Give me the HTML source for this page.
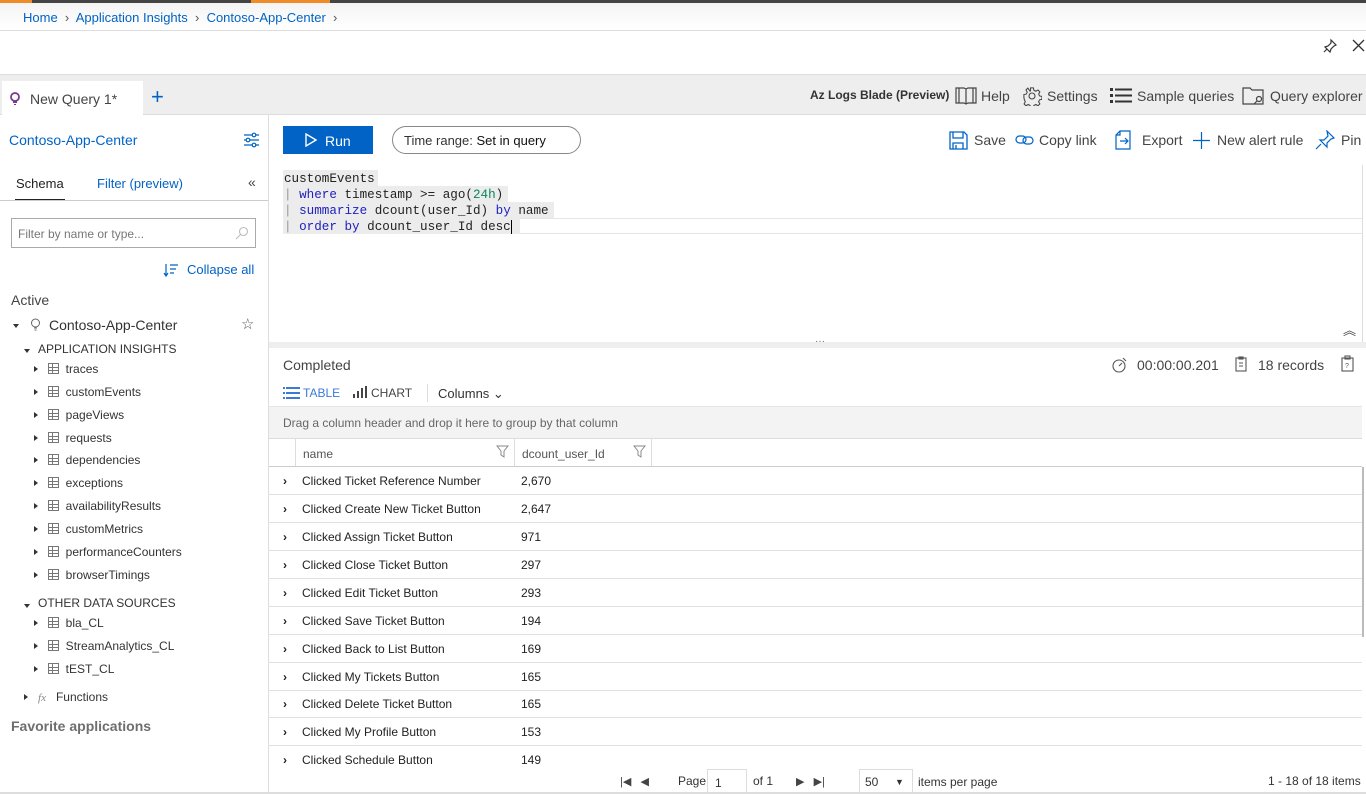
<!DOCTYPE html>
<html><head><meta charset="utf-8"><style>
*{box-sizing:border-box;margin:0;padding:0}
body{width:1366px;height:794px;overflow:hidden;background:#fff;font-family:"Liberation Sans",sans-serif;font-size:13px;color:#333;position:relative}
.a{position:absolute;white-space:nowrap}
.blue{color:#0063c5}
.mono{font-family:"Liberation Mono",monospace;font-size:12.6px}
.tri{display:inline-block;width:0;height:0;border-top:3px solid transparent;border-bottom:3px solid transparent;border-left:4px solid #333;vertical-align:1px}
.trd{display:inline-block;width:0;height:0;border-left:3.5px solid transparent;border-right:3.5px solid transparent;border-top:4px solid #333}
.tbl{display:inline-block;width:11px;height:11px;border:1px solid #777;vertical-align:-1px;background:linear-gradient(#777,#777) 0 3px/100% 1px no-repeat,linear-gradient(#777,#777) 0 6px/100% 1px no-repeat,linear-gradient(#777,#777) 3px 0/1px 100% no-repeat}
.row{position:absolute;left:268px;width:1094px;height:28px;border-bottom:1px solid #e1e1e1;font-size:12px;color:#222}
.row span{position:absolute;top:7px}
.tr div{height:22.85px}
</style></head><body>
<div class="a" style="left:0;top:0;width:1366px;height:3px;background:#444"></div>
<div class="a" style="left:0;top:0;width:32px;height:3px;background:#f08c28"></div>
<div class="a" style="left:251px;top:0;width:79px;height:3px;background:#f08c28"></div>
<div class="a" style="left:0;top:3px;width:1366px;height:27px;background:linear-gradient(#f4f4f4,#fff)"></div>
<div class="a" style="left:0;top:30px;width:1366px;height:1px;background:#ddd"></div>
<div class="a blue" style="left:23px;top:10px;font-size:13px">Home <span style="color:#555">&nbsp;›&nbsp;</span> Application Insights <span style="color:#555">&nbsp;›&nbsp;</span> Contoso-App-Center <span style="color:#555">&nbsp;›</span></div>
<svg class="a" style="left:1322px;top:38px" width="16" height="16" viewBox="0 0 16 16" fill="none" stroke="#333" stroke-width="1.2"><path d="M9 2l5 5-2 1-3 3-1 3-5-5 3-1 3-3z M5 11l-3 3"/></svg>
<svg class="a" style="left:1352px;top:39px" width="13" height="13" viewBox="0 0 13 13" stroke="#333" stroke-width="1.3"><path d="M1 1l11 11M12 1L1 12"/></svg>
<div class="a" style="left:0;top:74px;width:1366px;height:41px;background:#eee;border-top:1px solid #ddd;border-bottom:1px solid #ddd"></div>
<div class="a" style="left:2px;top:81px;width:141px;height:35px;background:#fff"></div>
<svg class="a" style="left:9px;top:92px" width="12" height="14" viewBox="0 0 12 14"><circle cx="6" cy="5" r="4" fill="none" stroke="#7a3b8f" stroke-width="1.8"/><path d="M4 9h4v2H4z M5 12h2v1H5z" fill="#7a3b8f"/></svg>
<div class="a" style="left:30px;top:91px;font-size:14px;color:#444">New Query 1*</div>
<div class="a" style="left:151px;top:84px;font-size:22px;color:#0063c5;font-weight:300">+</div>
<div class="a" style="left:810px;top:88px;font-size:12px;font-weight:bold;color:#333">Az Logs Blade (Preview)</div>
<svg class="a" style="left:955px;top:86px" width="22" height="19" viewBox="0 0 22 19" fill="none" stroke="#444" stroke-width="1.2"><path d="M1 2h8l2 1 2-1h8v15h-8l-2 1-2-1H1z M11 3v15 M4 2v15 M18 2v15"/></svg>
<div class="a" style="left:981px;top:88px;font-size:14px;color:#444">Help</div>
<svg class="a" style="left:1022px;top:86px" width="20" height="20" viewBox="0 0 20 20" fill="none" stroke="#444" stroke-width="1.1"><circle cx="10" cy="10" r="3"/><path d="M8.5 1.5h3l.5 2.5 2 1 2.3-1.3 2 2-1.3 2.3 1 2 2.5.5v3l-2.5.5-1 2 1.3 2.3-2 2-2.3-1.3-2 1-.5 2.5h-3l-.5-2.5-2-1-2.3 1.3-2-2 1.3-2.3-1-2L1.5 11.5v-3l2.5-.5 1-2-1.3-2.3 2-2L8 5l.5-1z" transform="scale(.95) translate(.5 .5)"/></svg>
<div class="a" style="left:1047px;top:88px;font-size:14px;color:#444">Settings</div>
<svg class="a" style="left:1110px;top:87px" width="22" height="17" viewBox="0 0 22 17" fill="#333"><rect x="0" y="1" width="3" height="3"/><rect x="5" y="1.5" width="17" height="2"/><rect x="0" y="7" width="3" height="3"/><rect x="5" y="7.5" width="17" height="2"/><rect x="0" y="13" width="3" height="3"/><rect x="5" y="13.5" width="17" height="2"/></svg>
<div class="a" style="left:1137px;top:88px;font-size:14px;color:#444">Sample queries</div>
<svg class="a" style="left:1242px;top:86px" width="23" height="20" viewBox="0 0 23 20" fill="none" stroke="#444" stroke-width="1.2"><path d="M1 2h7l2 2h11v14H1z"/><circle cx="17" cy="13" r="2.5"/><path d="M15 15l-3 3"/></svg>
<div class="a" style="left:1270px;top:88px;font-size:14px;color:#444">Query explorer</div>
<div class="a" style="left:268px;top:115px;width:1px;height:679px;background:#ddd"></div>
<div class="a blue" style="left:9px;top:132px;font-size:14px">Contoso-App-Center</div>
<svg class="a" style="left:243px;top:132px" width="17" height="16" viewBox="0 0 17 16" fill="none" stroke="#0063c5" stroke-width="1.2"><path d="M1 3h15M1 8h15M1 13h15"/><circle cx="11" cy="3" r="1.8" fill="#fff"/><circle cx="5" cy="8" r="1.8" fill="#fff"/><circle cx="11" cy="13" r="1.8" fill="#fff"/></svg>
<div class="a" style="left:16px;top:176px;font-size:13px;color:#222">Schema</div>
<div class="a" style="left:15px;top:199px;width:50px;height:2px;background:#222"></div>
<div class="a blue" style="left:97px;top:176px;font-size:13px">Filter (preview)</div>
<div class="a" style="left:248px;top:174px;font-size:14px;color:#444">«</div>
<div class="a" style="left:0;top:200px;width:268px;height:1px;background:#ccc"></div>
<div class="a" style="left:11px;top:218px;width:245px;height:30px;border:1px solid #aaa"></div>
<div class="a" style="left:18px;top:227px;font-size:12px;color:#777">Filter by name or type...</div>
<svg class="a" style="left:235px;top:226px" width="14" height="14" viewBox="0 0 14 14" fill="none" stroke="#bbb" stroke-width="1.1"><circle cx="8.5" cy="5.5" r="4"/><path d="M5.5 8.5L1 13"/></svg>
<svg class="a" style="left:163px;top:263px" width="16" height="14" viewBox="0 0 16 14" fill="none" stroke="#0063c5" stroke-width="1.2"><path d="M3 1v12M1 10l2 3 2-3M7 2h8M7 6h6M7 10h4"/></svg>
<div class="a blue" style="left:187px;top:262px;font-size:13px">Collapse all</div>
<div class="a" style="left:11px;top:292px;font-size:14px;color:#444">Active</div>
<div class="a" style="left:13px;top:316px"><span class="trd"></span></div>
<svg class="a" style="left:30px;top:318px" width="11" height="13" viewBox="0 0 11 13" fill="none" stroke="#666" stroke-width="1"><circle cx="5.5" cy="5" r="4"/><path d="M4 10h3M4.5 12h2"/></svg>
<div class="a" style="left:49px;top:317px;font-size:14px;color:#333">Contoso-App-Center</div>
<div class="a" style="left:241px;top:315px;font-size:15px;color:#555">☆</div>
<div class="a" style="left:24px;top:341px"><span class="trd"></span></div>
<div class="a" style="left:38px;top:342px;font-size:12px;color:#333">APPLICATION INSIGHTS</div>
<div class="a tr" style="left:34px;top:362px;line-height:15px;font-size:12px;color:#333">
<div><span class="tri"></span>&nbsp;&nbsp;&nbsp;<span class="tbl"></span>&nbsp;&nbsp;traces</div>
<div><span class="tri"></span>&nbsp;&nbsp;&nbsp;<span class="tbl"></span>&nbsp;&nbsp;customEvents</div>
<div><span class="tri"></span>&nbsp;&nbsp;&nbsp;<span class="tbl"></span>&nbsp;&nbsp;pageViews</div>
<div><span class="tri"></span>&nbsp;&nbsp;&nbsp;<span class="tbl"></span>&nbsp;&nbsp;requests</div>
<div><span class="tri"></span>&nbsp;&nbsp;&nbsp;<span class="tbl"></span>&nbsp;&nbsp;dependencies</div>
<div><span class="tri"></span>&nbsp;&nbsp;&nbsp;<span class="tbl"></span>&nbsp;&nbsp;exceptions</div>
<div><span class="tri"></span>&nbsp;&nbsp;&nbsp;<span class="tbl"></span>&nbsp;&nbsp;availabilityResults</div>
<div><span class="tri"></span>&nbsp;&nbsp;&nbsp;<span class="tbl"></span>&nbsp;&nbsp;customMetrics</div>
<div><span class="tri"></span>&nbsp;&nbsp;&nbsp;<span class="tbl"></span>&nbsp;&nbsp;performanceCounters</div>
<div><span class="tri"></span>&nbsp;&nbsp;&nbsp;<span class="tbl"></span>&nbsp;&nbsp;browserTimings</div>
</div>
<div class="a" style="left:24px;top:596px"><span class="trd"></span></div>
<div class="a" style="left:38px;top:596px;font-size:12px;color:#333">OTHER DATA SOURCES</div>
<div class="a tr" style="left:34px;top:616px;line-height:15px;font-size:12px;color:#333">
<div><span class="tri"></span>&nbsp;&nbsp;&nbsp;<span class="tbl"></span>&nbsp;&nbsp;bla_CL</div>
<div><span class="tri"></span>&nbsp;&nbsp;&nbsp;<span class="tbl"></span>&nbsp;&nbsp;StreamAnalytics_CL</div>
<div><span class="tri"></span>&nbsp;&nbsp;&nbsp;<span class="tbl"></span>&nbsp;&nbsp;tEST_CL</div>
</div>
<div class="a" style="left:24px;top:690px;font-size:12px;color:#333"><span class="tri"></span>&nbsp;&nbsp;&nbsp;<i style="color:#888;font-family:'Liberation Serif',serif;font-size:11px">fx</i>&nbsp;&nbsp;&nbsp;Functions</div>
<div class="a" style="left:11px;top:718px;font-size:14px;color:#555;font-weight:bold;opacity:.85">Favorite applications</div>
<div class="a" style="left:283px;top:126px;width:90px;height:28px;background:#0063c5"></div>
<svg class="a" style="left:305px;top:133px" width="12" height="14" viewBox="0 0 12 14" fill="none" stroke="#fff" stroke-width="1.4"><path d="M1 1l10 6-10 6z"/></svg>
<div class="a" style="left:325px;top:133px;font-size:14px;color:#fff">Run</div>
<div class="a" style="left:392px;top:126px;width:189px;height:28px;border:1px solid #888;border-radius:14px"></div>
<div class="a" style="left:404px;top:133px;font-size:13px;color:#333">Time range: <span style="color:#111">Set in query</span></div>
<svg class="a" style="left:949px;top:131px" width="19" height="19" viewBox="0 0 19 19" fill="none" stroke="#0063c5" stroke-width="1.3"><path d="M1 1h14l3 3v14H1z M4 1v6h10V1 M4 18v-6h10v6 M7 14v4"/></svg>
<div class="a" style="left:974px;top:132px;font-size:14px;color:#444">Save</div>
<svg class="a" style="left:1015px;top:134px" width="19" height="12" viewBox="0 0 19 12" fill="none" stroke="#0063c5" stroke-width="1.2"><rect x="1" y="2" width="10" height="7" rx="3.5"/><rect x="8" y="3" width="10" height="7" rx="3.5"/></svg>
<div class="a" style="left:1039px;top:132px;font-size:14px;color:#444">Copy link</div>
<svg class="a" style="left:1114px;top:130px" width="18" height="20" viewBox="0 0 18 20" fill="none" stroke="#0063c5" stroke-width="1.2"><path d="M6 1h10v18H2V5z M6 1v4H2 M6 11h8M11 8l3 3-3 3"/></svg>
<div class="a" style="left:1142px;top:132px;font-size:14px;color:#444">Export</div>
<svg class="a" style="left:1193px;top:132px" width="17" height="17" viewBox="0 0 17 17" stroke="#0063c5" stroke-width="1.2"><path d="M8.5 0v17M0 8.5h17"/></svg>
<div class="a" style="left:1217px;top:132px;font-size:14px;color:#444">New alert rule</div>
<svg class="a" style="left:1315px;top:130px" width="20" height="20" viewBox="0 0 20 20" fill="none" stroke="#0063c5" stroke-width="1.2"><path d="M12 1l7 7-3 1-4 4 0 4-7-7 4 0 4-4z M6 14l-5 5"/></svg>
<div class="a" style="left:1341px;top:132px;font-size:14px;color:#444">Pin</div>
<div class="a" style="left:283px;top:170px;width:95px;height:16px;background:#ececec"></div>
<div class="a" style="left:283px;top:186px;width:225px;height:16px;background:#ececec"></div>
<div class="a" style="left:283px;top:202px;width:271px;height:16px;background:#ececec"></div>
<div class="a" style="left:283px;top:218px;width:237px;height:16px;background:#ececec"></div>
<div class="a" style="left:520px;top:218px;width:843px;height:16px;border-top:1px solid #e5e5e5;border-bottom:1px solid #e5e5e5"></div>
<div class="a mono" style="left:284px;top:171px;line-height:16px;color:#222">
<div>customEvents</div>
<div><span style="color:#999">|</span> <span style="color:#2020c0">where</span> timestamp &gt;= ago(<span style="color:#098658">24h</span>)</div>
<div><span style="color:#999">|</span> <span style="color:#2020c0">summarize</span> dcount(user_Id) <span style="color:#2020c0">by</span> name</div>
<div><span style="color:#999">|</span> <span style="color:#2020c0">order by</span> dcount_user_Id desc <span style="border-left:1.5px solid #000"></span></div>
</div>
<div class="a" style="left:1362px;top:165px;width:1px;height:180px;background:#ddd"></div>
<div class="a" style="left:1343px;top:320px;font-size:13px;color:#444">︽</div>
<div class="a" style="left:269px;top:342px;width:1097px;height:6px;background:#eee"></div>
<div class="a" style="left:815px;top:336px;font-size:10px;color:#666">···</div>
<div class="a" style="left:283px;top:357px;font-size:14px;color:#444">Completed</div>
<svg class="a" style="left:1112px;top:357px" width="16" height="16" viewBox="0 0 16 16" fill="none" stroke="#555" stroke-width="1.1"><circle cx="7" cy="9" r="6"/><path d="M7 9l3-3M11 1l3 3"/></svg>
<div class="a" style="left:1137px;top:357px;font-size:14px;color:#444">00:00:00.201</div>
<svg class="a" style="left:1235px;top:356px" width="12" height="16" viewBox="0 0 12 16" fill="none" stroke="#555" stroke-width="1.1"><rect x="1" y="2" width="10" height="13"/><rect x="4" y="1" width="4" height="2"/><path d="M4 7h4M4 10h4"/></svg>
<div class="a" style="left:1258px;top:357px;font-size:14px;color:#444">18 records</div>
<svg class="a" style="left:1341px;top:355px" width="13" height="17" viewBox="0 0 13 17" fill="none" stroke="#555" stroke-width="1.1"><rect x="1" y="3" width="11" height="13"/><rect x="4" y="1" width="5" height="3"/><text x="4" y="13" font-size="7" fill="#555" stroke="none" font-family="Liberation Sans">?</text></svg>
<svg class="a" style="left:283px;top:387px" width="17" height="12" viewBox="0 0 17 12" fill="#3a7bd5"><rect x="0" y="0" width="2" height="2"/><rect x="3" y="0" width="14" height="2"/><rect x="0" y="5" width="2" height="2"/><rect x="3" y="5" width="14" height="2"/><rect x="0" y="10" width="2" height="2"/><rect x="3" y="10" width="14" height="2"/></svg>
<div class="a" style="left:303px;top:386px;font-size:12px;color:#3a7bd5">TABLE</div>
<svg class="a" style="left:353px;top:386px" width="15" height="12" viewBox="0 0 15 12" fill="#444"><rect x="0" y="8" width="2" height="4"/><rect x="4" y="5" width="2" height="7"/><rect x="8" y="2" width="2" height="10"/><rect x="12" y="0" width="2" height="12"/></svg>
<div class="a" style="left:371px;top:386px;font-size:12px;color:#444">CHART</div>
<div class="a" style="left:427px;top:384px;width:1px;height:18px;background:#ddd"></div>
<div class="a" style="left:438px;top:386px;font-size:13px;color:#333">Columns ⌄</div>
<div class="a" style="left:269px;top:406px;width:1093px;height:32px;background:#f3f3f3;border-top:1px solid #e5e5e5"></div>
<div class="a" style="left:283px;top:416px;font-size:12px;color:#666">Drag a column header and drop it here to group by that column</div>
<div class="a" style="left:269px;top:438px;width:1093px;height:29px;border-top:1px solid #ddd;border-bottom:1px solid #ccc"></div>
<div class="a" style="left:295px;top:439px;width:1px;height:27px;background:#ddd"></div>
<div class="a" style="left:514px;top:439px;width:1px;height:27px;background:#ddd"></div>
<div class="a" style="left:651px;top:439px;width:1px;height:27px;background:#ddd"></div>
<div class="a" style="left:303px;top:447px;font-size:12px;color:#555">name</div>
<div class="a" style="left:522px;top:447px;font-size:12px;color:#555">dcount_user_Id</div>
<svg class="a" style="left:496px;top:445px" width="13" height="13" viewBox="0 0 13 13" fill="none" stroke="#888"><path d="M1 1h11L8 6v6L5 10V6z"/></svg>
<svg class="a" style="left:633px;top:445px" width="13" height="13" viewBox="0 0 13 13" fill="none" stroke="#888"><path d="M1 1h11L8 6v6L5 10V6z"/></svg>
<div class="row" style="top:467px"><span style="left:15px;font-weight:bold">›</span><span style="left:34px">Clicked Ticket Reference Number</span><span style="left:253px">2,670</span></div>
<div class="row" style="top:495px"><span style="left:15px;font-weight:bold">›</span><span style="left:34px">Clicked Create New Ticket Button</span><span style="left:253px">2,647</span></div>
<div class="row" style="top:523px"><span style="left:15px;font-weight:bold">›</span><span style="left:34px">Clicked Assign Ticket Button</span><span style="left:253px">971</span></div>
<div class="row" style="top:551px"><span style="left:15px;font-weight:bold">›</span><span style="left:34px">Clicked Close Ticket Button</span><span style="left:253px">297</span></div>
<div class="row" style="top:579px"><span style="left:15px;font-weight:bold">›</span><span style="left:34px">Clicked Edit Ticket Button</span><span style="left:253px">293</span></div>
<div class="row" style="top:607px"><span style="left:15px;font-weight:bold">›</span><span style="left:34px">Clicked Save Ticket Button</span><span style="left:253px">194</span></div>
<div class="row" style="top:635px"><span style="left:15px;font-weight:bold">›</span><span style="left:34px">Clicked Back to List Button</span><span style="left:253px">169</span></div>
<div class="row" style="top:663px"><span style="left:15px;font-weight:bold">›</span><span style="left:34px">Clicked My Tickets Button</span><span style="left:253px">165</span></div>
<div class="row" style="top:690px"><span style="left:15px;font-weight:bold">›</span><span style="left:34px">Clicked Delete Ticket Button</span><span style="left:253px">165</span></div>
<div class="row" style="top:718px"><span style="left:15px;font-weight:bold">›</span><span style="left:34px">Clicked My Profile Button</span><span style="left:253px">153</span></div>
<div class="row" style="top:746px;border-bottom:none"><span style="left:15px;font-weight:bold">›</span><span style="left:34px">Clicked Schedule Button</span><span style="left:253px">149</span></div>
<div class="a" style="left:1362px;top:467px;width:2px;height:170px;background:#bbb"></div>
<div class="a" style="left:269px;top:768px;width:1097px;height:26px;background:#fff"></div>
<div class="a" style="left:620px;top:775px;font-size:11px;color:#444">|◀&nbsp;&nbsp;&nbsp;◀</div>
<div class="a" style="left:678px;top:774px;font-size:12px;color:#333">Page</div>
<div class="a" style="left:707px;top:769px;width:40px;height:25px;border:1px solid #ddd;border-bottom:none"></div>
<div class="a" style="left:715px;top:776px;font-size:12px;color:#333">1</div>
<div class="a" style="left:753px;top:774px;font-size:12px;color:#333">of 1</div>
<div class="a" style="left:796px;top:775px;font-size:11px;color:#444">▶&nbsp;&nbsp;&nbsp;▶|</div>
<div class="a" style="left:859px;top:769px;width:54px;height:25px;border:1px solid #ddd;border-bottom:none"></div>
<div class="a" style="left:865px;top:775px;font-size:12px;color:#333">50</div>
<div class="a" style="left:895px;top:777px;font-size:9px;color:#333">▼</div>
<div class="a" style="left:918px;top:775px;font-size:12px;color:#333">items per page</div>
<div class="a" style="left:1268px;top:774px;font-size:12px;color:#333">1 - 18 of 18 items</div>
<div class="a" style="left:0;top:792px;width:1366px;height:2px;background:#ddd"></div>
</body></html>
